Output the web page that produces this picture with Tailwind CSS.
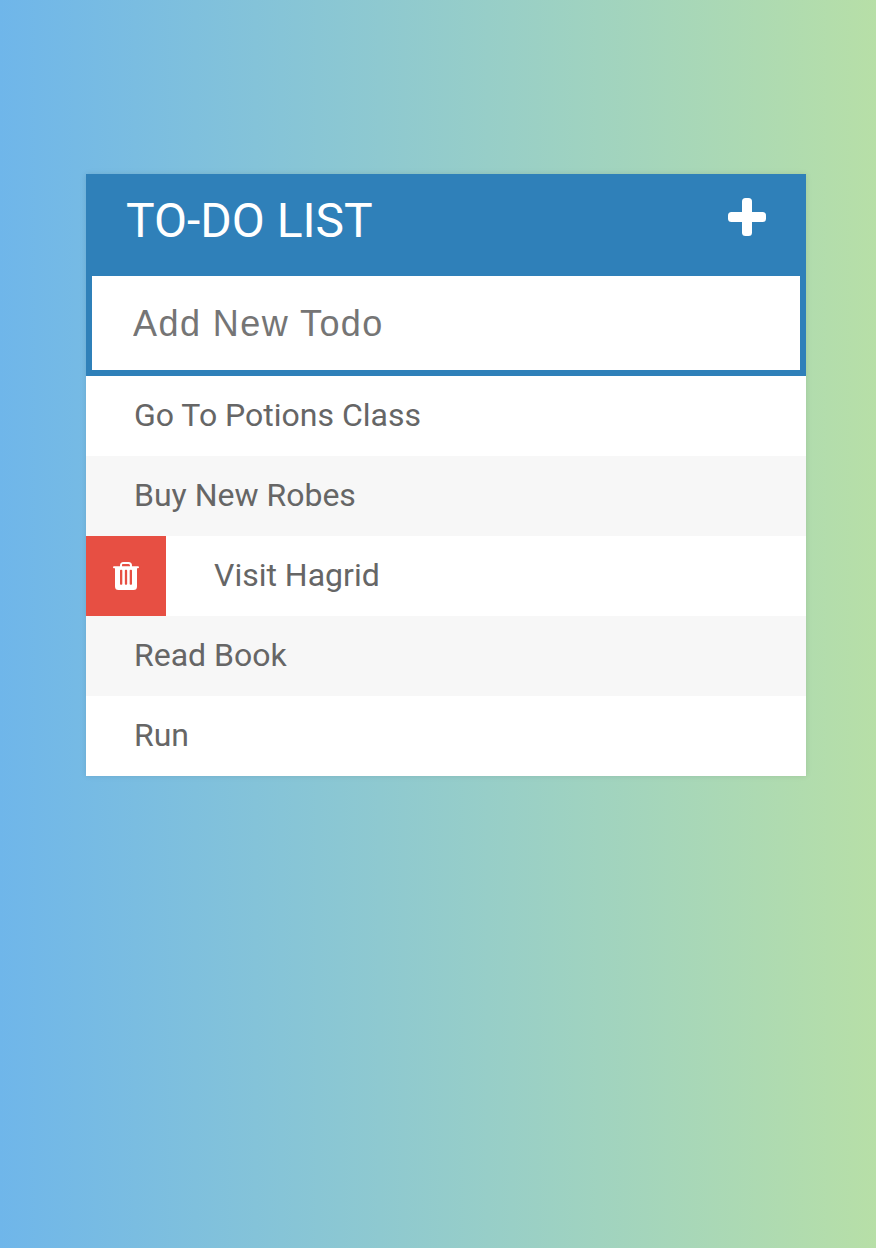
<!DOCTYPE html>
<html lang="en">
<head>
    <meta charset="UTF-8">
    <title>To-Do List</title>
    <script src="https://cdn.jsdelivr.net/npm/@tailwindcss/browser@4"></script>
</head>
<body class="h-[1248px] overflow-hidden bg-gradient-to-r from-[#6fb6ea] to-[#b7dfa7] font-['Roboto',sans-serif]">
    <div class="ml-[86px] w-[720px] pt-[174px]">
        <div class="bg-white shadow-[0_0_6px_rgba(0,0,0,0.1)]">
            <header class="flex h-[102px] items-start justify-between bg-[#2f80b9] pl-[40px] pr-[40px] text-white">
                <h1 class="text-[48px] leading-[94px] font-normal">TO-DO LIST</h1>
                <svg class="mt-[24px] h-[38px] w-[38px]" viewBox="0 0 38 38" fill="#fff">
                    <rect x="14" y="0" width="10" height="38" rx="3.500"/>
                    <rect x="0" y="14" width="38" height="10" rx="3.500"/>
                </svg>
            </header>
            <input class="block h-[100px] w-full border-x-[6px] border-b-[6px] border-[#2f80b9] bg-white pt-[2px] pl-[41px] font-['Liberation_Sans',sans-serif] text-[36px] tracking-[1.44px] text-[#757575] outline-none placeholder:text-[#757575]" placeholder="Add New Todo">
            <ul class="text-[32px] leading-[78px] text-[#666]">
                <li class="h-20 pl-[48px]">Go To Potions Class</li>
                <li class="h-20 bg-[#f7f7f7] pl-[48px]">Buy New Robes</li>
                <li class="flex h-20">
                    <span class="mr-[48px] flex h-20 w-20 items-center justify-center bg-[#e74f43]">
                        <svg class="h-[28px] w-[26px]" viewBox="0 0 26 28" fill="#fff">
                            <path fill-rule="evenodd" d="M7 4.200V3.500A3.500 3.500 0 0 1 10.500 0h5A3.500 3.500 0 0 1 19 3.500v.7h6a1 1 0 0 1 0 2h-1V24.500a3.500 3.500 0 0 1-3.500 3.500H5.500A3.500 3.500 0 0 1 2 24.500V6.200H1a1 1 0 0 1 0-2ZM9 4.200h8V3.500A1.500 1.500 0 0 0 15.500 2h-6A1.500 1.500 0 0 0 9 3.500ZM7 8.500v13.500a.8.8 0 0 0 .8.8h.7a.8.8 0 0 0 .8-.8V8.500a.8.8 0 0 0-.8-.8h-.7a.8.8 0 0 0-.8.8Zm4.850 0v13.500a.8.8 0 0 0 .8.8h.7a.8.8 0 0 0 .8-.8V8.500a.8.8 0 0 0-.8-.8h-.7a.8.8 0 0 0-.8.8Zm4.850 0v13.500a.8.8 0 0 0 .8.8h.7a.8.8 0 0 0 .8-.8V8.500a.8.8 0 0 0-.8-.8h-.7a.8.8 0 0 0-.8.8Z"/>
                        </svg>
                    </span>
                    Visit Hagrid
                </li>
                <li class="h-20 bg-[#f7f7f7] pl-[48px]">Read Book</li>
                <li class="h-20 pl-[48px]">Run</li>
            </ul>
        </div>
    </div>
</body>
</html>
